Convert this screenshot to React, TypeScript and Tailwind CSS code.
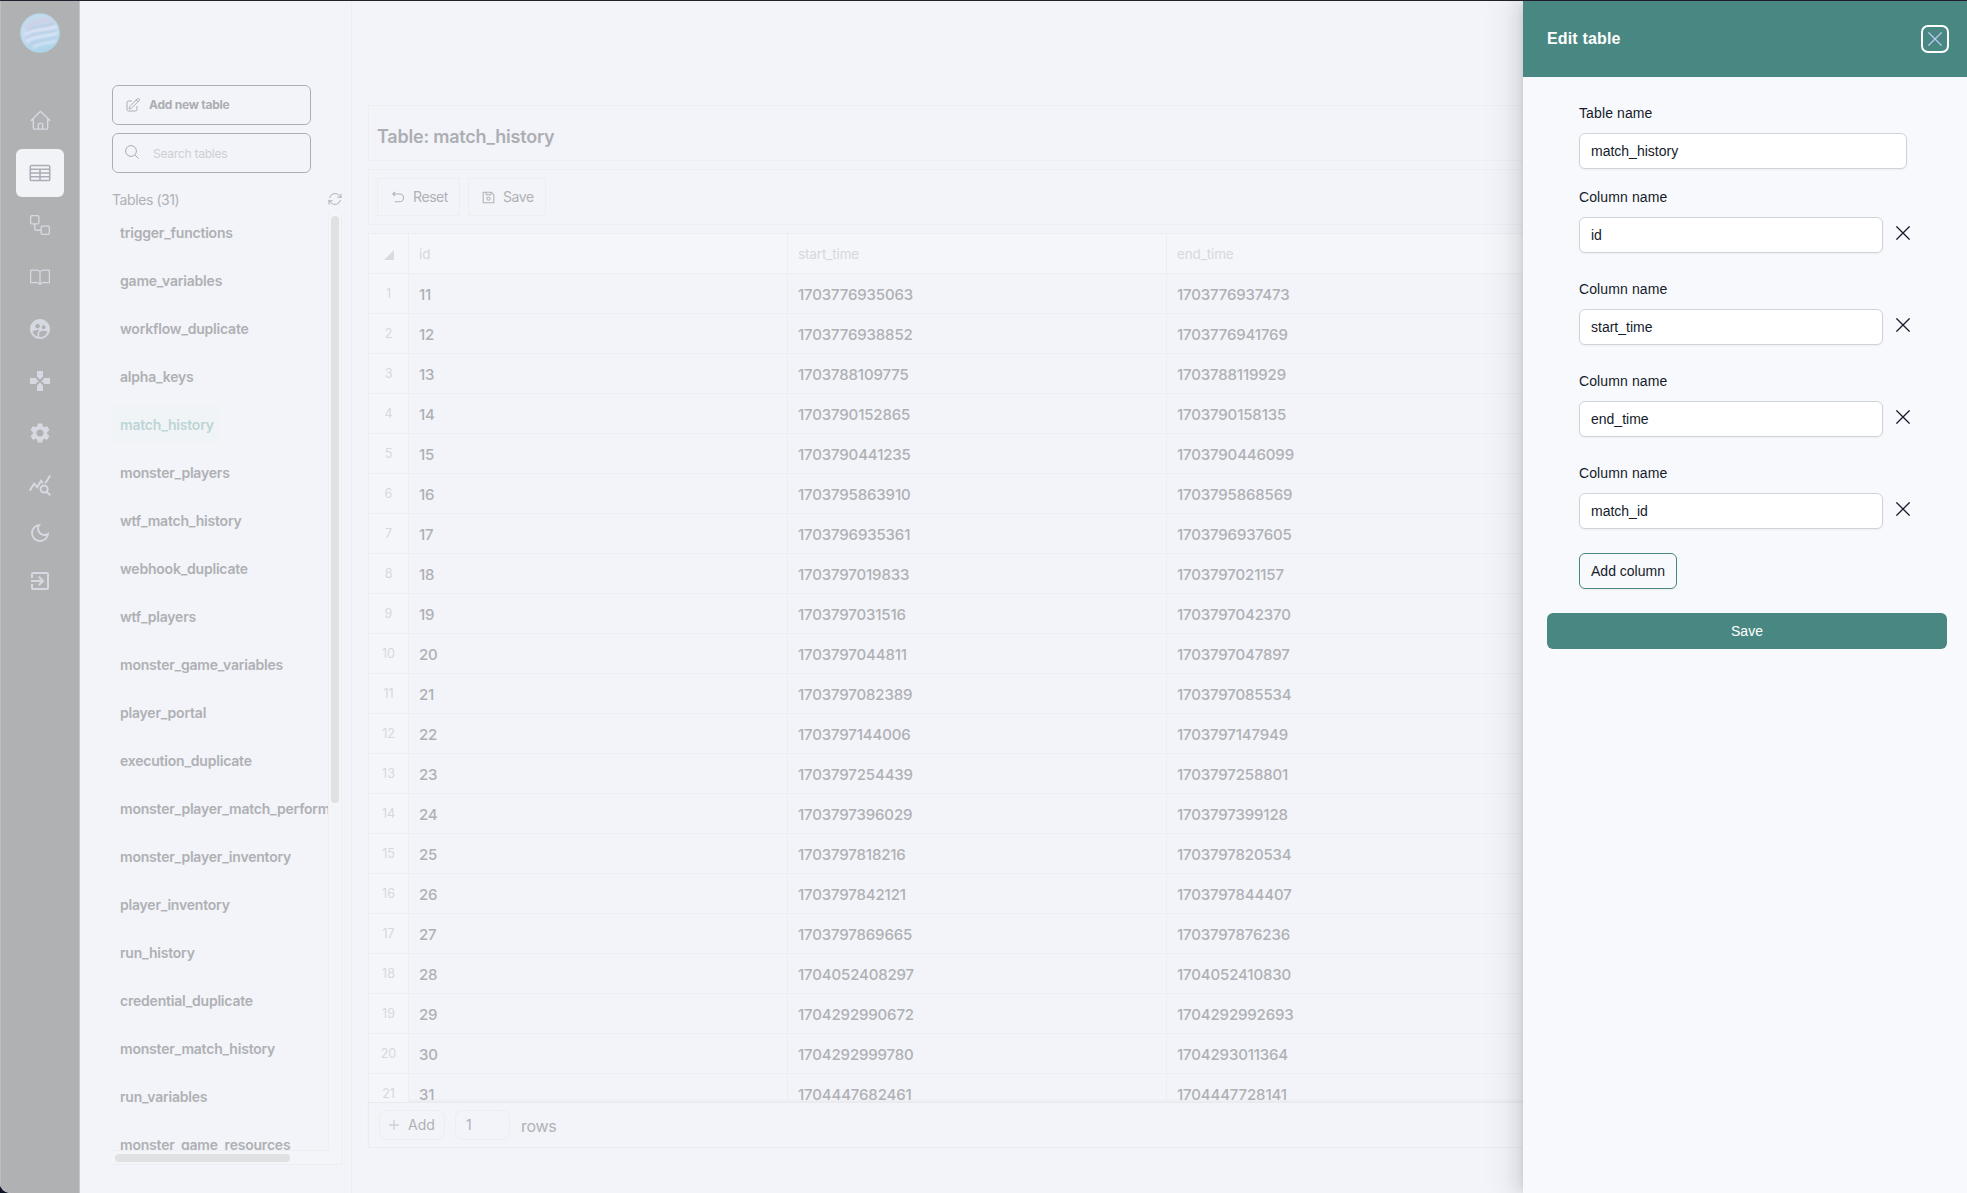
import type { ReactNode } from "react";
import {
  MdSupervisedUserCircle,
  MdGames,
  MdSettings,
  MdQueryStats,
  MdOutlineDarkMode,
  MdExitToApp,
} from "react-icons/md";
import { GoWorkflow, GoBook } from "react-icons/go";
import {
  HiOutlineHome,
  HiOutlineTableCells,
  HiOutlinePencilSquare,
  HiOutlineArrowPath,
} from "react-icons/hi2";
import { AiOutlineSave } from "react-icons/ai";

const tables = [
  "trigger_functions",
  "game_variables",
  "workflow_duplicate",
  "alpha_keys",
  "match_history",
  "monster_players",
  "wtf_match_history",
  "webhook_duplicate",
  "wtf_players",
  "monster_game_variables",
  "player_portal",
  "execution_duplicate",
  "monster_player_match_performance",
  "monster_player_inventory",
  "player_inventory",
  "run_history",
  "credential_duplicate",
  "monster_match_history",
  "run_variables",
  "monster_game_resources",
];

const rows: [string, string][] = [
  ["1703776935063", "1703776937473"],
  ["1703776938852", "1703776941769"],
  ["1703788109775", "1703788119929"],
  ["1703790152865", "1703790158135"],
  ["1703790441235", "1703790446099"],
  ["1703795863910", "1703795868569"],
  ["1703796935361", "1703796937605"],
  ["1703797019833", "1703797021157"],
  ["1703797031516", "1703797042370"],
  ["1703797044811", "1703797047897"],
  ["1703797082389", "1703797085534"],
  ["1703797144006", "1703797147949"],
  ["1703797254439", "1703797258801"],
  ["1703797396029", "1703797399128"],
  ["1703797818216", "1703797820534"],
  ["1703797842121", "1703797844407"],
  ["1703797869665", "1703797876236"],
  ["1704052408297", "1704052410830"],
  ["1704292990672", "1704292992693"],
  ["1704292999780", "1704293011364"],
  ["1704447682461", "1704447728141"],
];

const columns = ["id", "start_time", "end_time", "match_id"];

function NavItem({ active, children }: { active?: boolean; children: ReactNode }) {
  return (
    <div
      className={
        active
          ? "flex size-12 items-center justify-center rounded-md bg-[#f1f3f6] text-[#aaadb6]"
          : "flex size-12 items-center justify-center text-[#d6d9e1]"
      }
    >
      {children}
    </div>
  );
}

function Logo() {
  return (
    <svg viewBox="0 0 40 40" className="size-10">
      <defs>
        <linearGradient id="ball" x1="0.3" y1="0" x2="0.6" y2="1">
          <stop offset="0" stopColor="#c3dbea" />
          <stop offset="0.5" stopColor="#c9d9ee" />
          <stop offset="1" stopColor="#a9d3ea" />
        </linearGradient>
        <clipPath id="ballClip">
          <circle cx="20" cy="20" r="19.5" />
        </clipPath>
        <filter id="soft">
          <feGaussianBlur stdDeviation="0.8" />
        </filter>
      </defs>
      <circle cx="20" cy="20" r="19.6" fill="url(#ball)" />
      <g clipPath="url(#ballClip)" fill="none" strokeLinecap="round" filter="url(#soft)">
        <path d="M7 14C13 8 20 9 31 6" stroke="#cfcfe8" strokeWidth="3.5" />
        <path d="M7 18C14 12 24 15 34 10" stroke="#b1c5e0" strokeWidth="1.4" />
        <path d="M6 21C14 15 25 18 36 14" stroke="#dce6f5" strokeWidth="2.6" />
        <path d="M6 25C15 18 27 21 36 17" stroke="#aec6e1" strokeWidth="1.4" />
        <path d="M7 28C15 22 28 24 37 20" stroke="#dae6f6" strokeWidth="2.6" />
        <path d="M11 31C18 26 29 28 36 24" stroke="#aecae3" strokeWidth="1.3" />
        <path d="M14 34C20 29 29 31 35 28" stroke="#d3e4f5" strokeWidth="2.6" />
      </g>
      <circle cx="20" cy="20" r="19.3" fill="none" stroke="#add6e9" strokeWidth="0.9" />
    </svg>
  );
}

function Sidebar() {
  return (
    <nav className="flex w-20 shrink-0 flex-col items-center border-l border-r border-l-[#bdbec1] border-r-[#c6c7cb] bg-[#b0b1b3] pt-3">
      <Logo />
      <div className="mt-11 flex flex-col items-center gap-1">
        <NavItem>
          <HiOutlineHome className="mb-0.5 size-[23px]" />
        </NavItem>
        <NavItem active>
          <HiOutlineTableCells className="size-6" />
        </NavItem>
        <NavItem>
          <GoWorkflow className="size-[22px]" />
        </NavItem>
        <NavItem>
          <GoBook className="size-5" />
        </NavItem>
        <NavItem>
          <MdSupervisedUserCircle className="size-6" />
        </NavItem>
        <NavItem>
          <MdGames className="size-6" />
        </NavItem>
        <NavItem>
          <MdSettings className="size-6" />
        </NavItem>
        <NavItem>
          <MdQueryStats className="size-6" />
        </NavItem>
      </div>
      <NavItem>
        <MdOutlineDarkMode className="size-6" />
      </NavItem>
      <NavItem>
        <MdExitToApp className="size-6" />
      </NavItem>
    </nav>
  );
}

function TableList() {
  return (
    <aside className="flex w-[272px] shrink-0 flex-col border-r border-[#eceef2] pl-8 pt-[84px]">
      <button className="flex h-10 w-[199px] items-center rounded-md border border-[#adafb5] pl-3 text-[#abadb1]">
        <HiOutlinePencilSquare className="size-4" />
        <span className="ml-2 text-xs font-bold tracking-[-0.02em]">Add new table</span>
      </button>
      <div className="mt-2 flex h-10 w-[199px] items-center rounded-md border border-[#adafb5] pl-3 text-[#aaacb1]">
        <svg viewBox="0 0 14 14" className="mb-0.5 size-3.5" fill="none" stroke="currentColor">
          <circle cx="6" cy="6" r="5.4" />
          <path d="M9.9 9.9L13.6 13.6" />
        </svg>
        <span className="ml-[14px] mt-0.5 text-xs tracking-[-0.02em] text-[#cdcfd4]">Search tables</span>
      </div>
      <div className="mt-3 flex h-7 w-[230px] items-center justify-between pt-0.5 text-sm tracking-[-0.03em] text-[#b0b1b5]">
        <span>Tables (31)</span>
        <HiOutlineArrowPath className="-mr-px -mt-0.5 size-4" />
      </div>
      <div className="flex h-[938px] w-[230px]">
        <div className="w-4 grow overflow-hidden border-b border-[#eceef1]">
          {tables.map((name) => (
            <div key={name} className="flex h-12">
              <span
                className={
                  name === "match_history"
                    ? "flex h-[39px] w-[108px] items-center whitespace-nowrap rounded bg-[#f1f4f6] px-2 text-sm font-semibold tracking-[-0.015em] text-[#bcd5d6]"
                    : "flex h-[39px] items-center whitespace-nowrap px-2 text-sm font-semibold tracking-[-0.015em] text-[#afb0b4]"
                }
              >
                {name}
              </span>
            </div>
          ))}
        </div>
        <div className="w-3.5 border-x border-[#eeeff2] bg-[#f4f5f8] px-[2px] pt-[3px]">
          <div className="h-[587px] w-2 rounded bg-[#e0e1e3]" />
        </div>
      </div>
      <div className="h-3.5 w-[230px] border-b border-r border-[#eceef1] bg-[#f4f5f8] pl-[3px] pt-[3px]">
        <div className="h-2 w-[175px] rounded bg-[#e0e1e3]" />
      </div>
    </aside>
  );
}

function Grid() {
  return (
    <div className="h-[868px] overflow-hidden">
      <div className="flex h-10 border-b border-[#eceef1] bg-[#f5f6f9] text-[13.5px] tracking-[-0.01em] text-[#d7d8db]">
        <div className="flex w-10 shrink-0 items-center justify-center border-r border-[#eceef1]">
          <svg viewBox="0 0 10 10" className="mt-0.5 size-2.5">
            <path d="M10 0V10H0Z" fill="#d9dadc" />
          </svg>
        </div>
        {columns.map((column) => (
          <div key={column} className="flex w-[379px] shrink-0 items-center border-r border-[#eceef1] pl-2.5 pt-0.5">
            {column}
          </div>
        ))}
      </div>
      {rows.map(([start, end], i) => (
        <div key={start} className="flex h-10 border-b border-[#eceef1] text-[15px] font-medium text-[#afb0b4]">
          <div className="flex w-10 shrink-0 items-center justify-center border-r border-[#eceef1] bg-[#f5f6f9] pt-0.5 text-[12.5px] font-normal text-[#d7d8db]">
            {i + 1}
          </div>
          {[String(i + 11), start, end, ""].map((value, c) => (
            <div
              key={c}
              className="flex w-[379px] shrink-0 items-center border-r border-[#eceef1] pl-2.5 pt-1 tracking-[-0.01em]"
            >
              {value}
            </div>
          ))}
        </div>
      ))}
    </div>
  );
}

function Main() {
  return (
    <main className="w-4 grow overflow-hidden pl-4 pr-3 pt-[104px] text-[#b0b1b5]">
      <div className="flex h-14 items-center border border-[#eceef1] px-2 pt-2">
        <h1 className="text-lg font-semibold tracking-[-0.012em] text-[#adaeb3]">Table: match_history</h1>
      </div>
      <div className="mt-2 flex h-14 items-center gap-2 border border-[#eceef1] px-2 text-sm tracking-[-0.03em]">
        <button className="flex h-[38px] w-[83px] items-center border border-[#eceef1] pl-3.5">
          <svg viewBox="0 0 12 12" className="mr-[9px] size-3" fill="none" stroke="currentColor" strokeWidth="1.1">
            <path d="M3 .8L.8 3L3 5.2M.8 3H7.6A3.8 3.8 0 0 1 7.6 10.8H2.8" />
          </svg>
          Reset
        </button>
        <button className="flex h-[38px] w-[78px] items-center border border-[#eceef1] pl-3">
          <AiOutlineSave className="mr-[7px] size-[15px]" />
          Save
        </button>
      </div>
      <div className="mt-2 border border-[#eceef1]">
        <Grid />
        <div className="flex h-[45px] items-center border-t border-[#e8eaed] px-2.5 pb-px text-sm shadow-[0_-1px_3px_rgba(0,0,0,0.05)]">
          <button className="flex h-[30px] w-[66px] items-center rounded-lg border border-[#eceef1] pl-2">
            <svg viewBox="0 0 12 12" className="mr-2 size-3" stroke="#cfd0d4" strokeWidth="1.3">
              <path d="M6 1V11M1 6H11" />
            </svg>
            Add
          </button>
          <div className="ml-2.5 flex h-[30px] w-[55px] items-center rounded-lg border border-[#eceef1] pl-2.5">1</div>
          <span className="ml-[11px] pt-0.5 text-base tracking-[-0.02em]">rows</span>
        </div>
      </div>
    </main>
  );
}

function Cross({ className }: { className: string }) {
  return (
    <svg viewBox="0 0 14 14" className={className} fill="none" stroke="currentColor" strokeWidth="1.3">
      <path d="M.4 .4L13.6 13.6M13.6 .4L.4 13.6" />
    </svg>
  );
}

const inputClass =
  "flex h-9 items-center rounded-md border border-[#cfd3da] bg-white px-[11px] shadow-[0_1px_2px_rgba(0,0,0,0.05)]";

function EditPanel() {
  return (
    <section className="absolute bottom-0 right-0 top-px flex w-[444px] flex-col bg-[#f8f9fc] font-['Liberation_Sans',Arial,sans-serif] text-sm leading-5 text-[#151b2b] shadow-[-6px_0_16px_0_rgba(0,0,0,0.08),-3px_0_6px_-4px_rgba(0,0,0,0.12),-9px_0_28px_8px_rgba(0,0,0,0.05)]">
      <header className="flex h-[76px] items-center justify-between bg-[#498782] pl-6 pr-[18px] text-white">
        <h2 className="text-base font-bold tracking-[0.01em]">Edit table</h2>
        <button className="flex size-7 items-center justify-center rounded-[7px] border-2 border-white text-[#bcc6f2]">
          <Cross className="size-3.5" />
        </button>
      </header>
      <div className="flex flex-col pl-14 pt-[26px]">
        <label className="tracking-[0.008em]">Table name</label>
        <div className={`mt-2.5 w-[328px] ${inputClass}`}>match_history</div>
        <div className="mt-[18px] flex flex-col gap-[26px]">
          {columns.map((column) => (
            <div key={column}>
              <label className="block tracking-[0.008em]">Column name</label>
              <div className="mt-2.5 flex items-center gap-[13px]">
                <div className={`w-[304px] ${inputClass}`}>{column}</div>
                <Cross className="mb-1 size-3.5" />
              </div>
            </div>
          ))}
        </div>
        <button className="mt-6 flex h-9 w-[98px] items-center justify-center rounded-md border border-[#498782] shadow-[0_1px_2px_rgba(0,0,0,0.05)]">
          Add column
        </button>
      </div>
      <button className="ml-6 mt-6 flex h-9 w-[400px] items-center justify-center rounded-md bg-[#498782] text-white">
        Save
      </button>
    </section>
  );
}

export default function App() {
  return (
    <div className="relative h-[1193px] overflow-hidden bg-[#0d1424] font-['Inter',sans-serif]">
      <div className="h-px bg-[#23202e]" />
      <div className="flex h-[1192px] overflow-hidden rounded-b-[10px] bg-[#f2f4f9]">
        <Sidebar />
        <TableList />
        <Main />
      </div>
      <EditPanel />
    </div>
  );
}
